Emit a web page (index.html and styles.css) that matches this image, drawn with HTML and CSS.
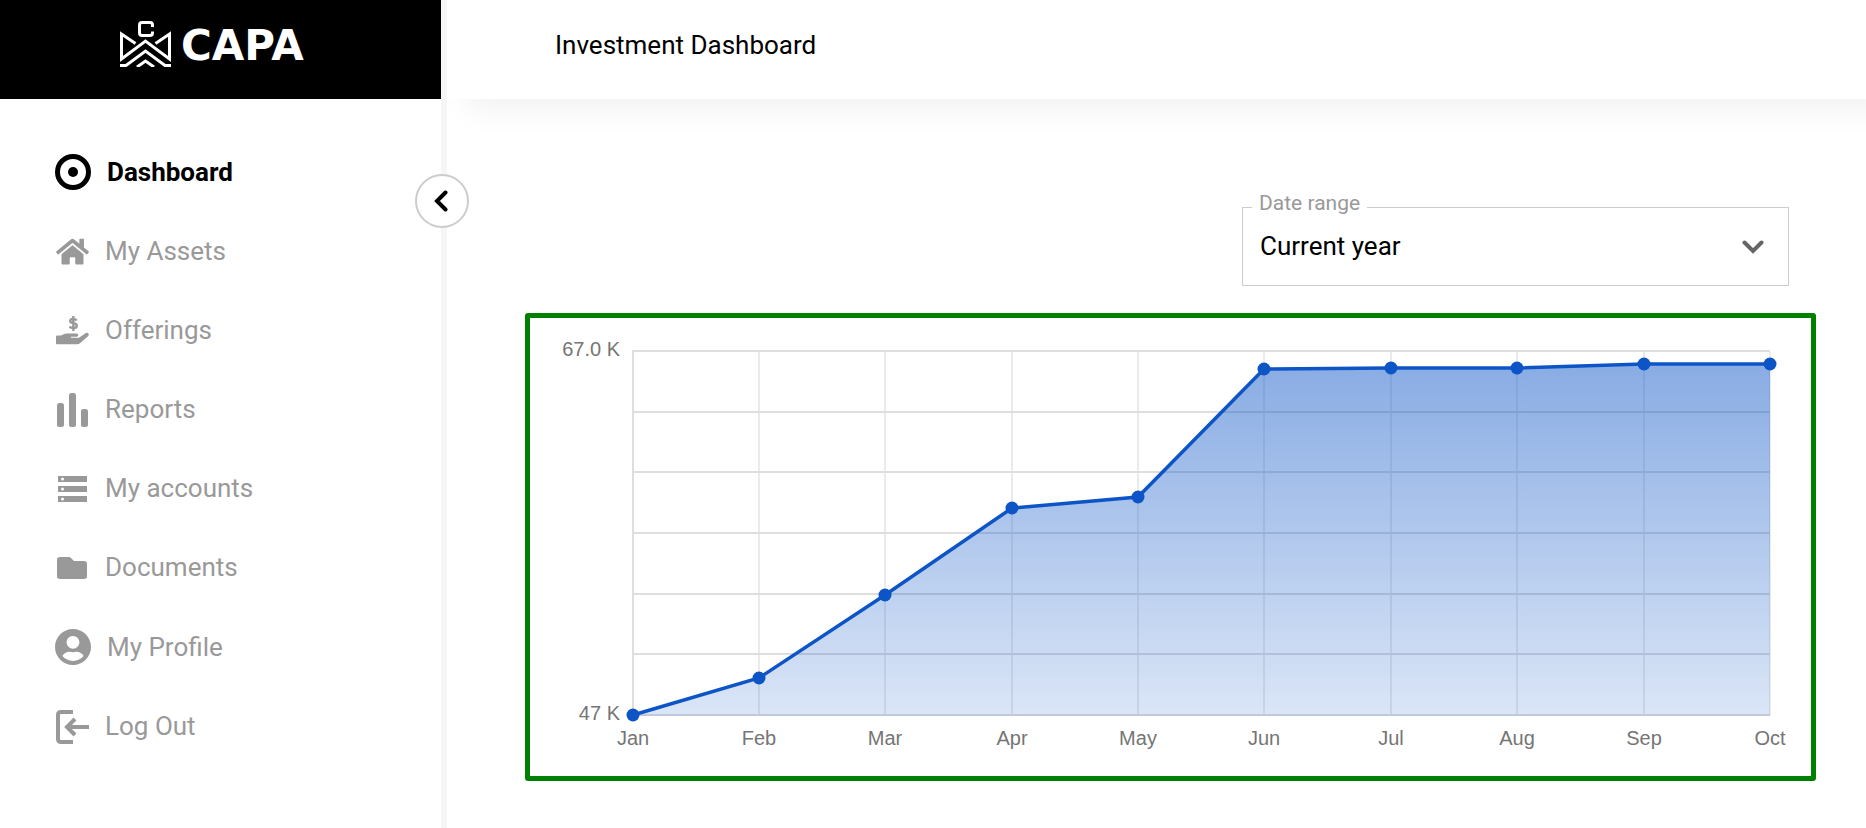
FILE: index.html
```html
<!DOCTYPE html>
<html lang="en">
<head>
    <meta charset="utf-8">
    <title>Investment Dashboard</title>
    <link rel="stylesheet" href="styles.css">
</head>
<body>
    <aside class="sidebar">
        <a class="logo" href="#">
            <svg class="logo-mark" viewBox="0 0 51 46" width="51" height="46">
                <path d="M32.500 6V4q0-2.500-2.500-2.500h-8q-2.500 0-2.500 2.500v8q0 2.500 2.500 2.500h8q2.500 0 2.500-2.500v-1.500"/>
                <path d="M15.500 22.500 1.500 13v25L25.500 20l24 18V13l-14 9.500"/>
                <path d="M0 44.500h6L25.500 30 45 44.500h6"/>
                <path d="M17 46l8.500-6 8.500 6"/>
            </svg>
            <span class="logo-text">CAPA</span>
        </a>
        <nav class="menu">
            <a class="menu-item active" href="#">
                <svg class="icon-large" viewBox="0 0 36 36">
                    <circle cx="18" cy="18" r="15.500" fill="none" stroke="currentColor" stroke-width="5"/>
                    <circle cx="18" cy="18" r="5" fill="currentColor"/>
                </svg>
                Dashboard
            </a>
            <a class="menu-item" href="#">
                <svg class="icon" viewBox="0 0 576 512"><path fill="currentColor" d="M280.370 148.260L96 300.110V464a16 16 0 0 0 16 16l112.060-.290a16 16 0 0 0 15.920-16V368a16 16 0 0 1 16-16h64a16 16 0 0 1 16 16v95.640a16 16 0 0 0 16 16.050L464 480a16 16 0 0 0 16-16V300L295.670 148.260a12.190 12.190 0 0 0-15.300 0zM571.600 251.470L488 182.560V44.050a12 12 0 0 0-12-12h-56a12 12 0 0 0-12 12v72.610L318.470 43a48 48 0 0 0-61 0L4.340 251.470a12 12 0 0 0-1.600 16.900l25.500 31A12 12 0 0 0 45.150 301l235.220-193.740a12.190 12.190 0 0 1 15.300 0L530.900 301a12 12 0 0 0 16.900-1.600l25.500-31a12 12 0 0 0-1.700-16.930z"/></svg>
                My Assets
            </a>
            <a class="menu-item" href="#">
                <svg class="icon" viewBox="0 0 33 30">
                    <path d="M20.500 4.500q-1-1.600-3.300-1.600-3 0-3 2.200 0 1.600 3.100 2.200 3.500.7 3.500 2.500 0 2.300-3.400 2.300-2.800 0-3.800-1.800M17.300 0v15" fill="none" stroke="currentColor" stroke-width="2.400"/>
                    <path fill="currentColor" d="M0 20.500q0-1 1-1h4l2.500-1.200q1.500-.800 3.500-.800h9.500q1.800 0 1.800 1.600t-1.800 1.600H15v1h8l6.500-4.500q1.700-1 2.900.3 1.100 1.300-.4 2.700l-8 7q-1.200 1.100-3 1.100H1q-1 0-1-1z"/>
                </svg>
                Offerings
            </a>
            <a class="menu-item" href="#">
                <svg class="icon" viewBox="0 0 33 34" fill="currentColor">
                    <rect x="1" y="10" width="7" height="24" rx="2.500"/>
                    <rect x="13" y="0" width="7" height="34" rx="2.500"/>
                    <rect x="25" y="16" width="7" height="18" rx="2.500"/>
                </svg>
                Reports
            </a>
            <a class="menu-item" href="#">
                <svg class="icon" viewBox="0 0 33 28">
                    <path fill="currentColor" d="M2 1h29v6H2zM2 11h29v6H2zM2 21h29v6H2z"/>
                    <g fill="#fff"><circle cx="6.500" cy="4" r="1.500"/><circle cx="6.500" cy="14" r="1.500"/><circle cx="6.500" cy="24" r="1.500"/></g>
                </svg>
                My accounts
            </a>
            <a class="menu-item" href="#">
                <svg class="icon" viewBox="0 0 33 24"><path fill="currentColor" d="M4 1h9q1 0 2 1l3 3h10q3 0 3 3v12q0 3-3 3H4q-3 0-3-3V4q0-3 3-3z"/></svg>
                Documents
            </a>
            <a class="menu-item" href="#">
                <svg class="icon-large" viewBox="0 0 496 496"><path fill="currentColor" d="M248 0C111 0 0 111 0 248s111 248 248 248 248-111 248-248S385 0 248 0zm0 96c48.600 0 88 39.400 88 88s-39.400 88-88 88-88-39.400-88-88 39.400-88 88-88zm0 344c-58.700 0-111.300-26.600-146.500-68.200 18.800-35.400 55.600-59.800 98.500-59.800 2.400 0 4.800.4 7.100 1.100 13 4.200 26.600 6.900 40.900 6.900 14.300 0 28-2.700 40.900-6.900 2.300-.7 4.700-1.100 7.100-1.100 42.900 0 79.700 24.400 98.500 59.800C359.300 413.400 306.700 440 248 440z"/></svg>
                My Profile
            </a>
            <a class="menu-item" href="#">
                <svg class="icon" viewBox="0 0 33 34" fill="none" stroke="currentColor" stroke-width="4">
                    <path d="M17 2H5Q2 2 2 5v24q0 3 3 3h12M33 17H12M19 9l-8 8 8 8"/>
                </svg>
                Log Out
            </a>
        </nav>
        <button class="collapse" type="button" aria-label="Collapse menu">
            <svg viewBox="0 0 14 22" width="14" height="22"><path d="M11.500 2.500 3 11l8.500 8.500" fill="none" stroke="currentColor" stroke-width="4" stroke-linecap="round"/></svg>
        </button>
    </aside>
    <div class="page">
        <header class="header">
            <h1>Investment Dashboard</h1>
        </header>
        <main class="content">
            <div class="field">
                <label for="range">Date range</label>
                <select id="range">
                    <option>Current year</option>
                </select>
                <svg class="arrow" viewBox="0 0 22 14" width="22" height="14"><path d="M2.500 2.500 11 11l8.500-8.500" fill="none" stroke="currentColor" stroke-width="4" stroke-linecap="round"/></svg>
            </div>
            <div class="chart">
                <svg viewBox="0 0 1281 458">
                    <defs>
                        <linearGradient id="fill" gradientUnits="userSpaceOnUse" x1="0" y1="34" x2="0" y2="398">
                            <stop offset="0" stop-color="#0d55c7" stop-opacity="0.500"/>
                            <stop offset="1" stop-color="#0d55c7" stop-opacity="0.150"/>
                        </linearGradient>
                    </defs>
                    <path class="grid-v" d="M229 34V397M355 34V397M482 34V397M608 34V397M734 34V397M861 34V397M987 34V397M1114 34V397M1240 34V397"/>
                    <path class="grid-h" d="M103 32V397M102 33H1240M103 94H1240M103 154H1240M103 215H1240M103 276H1240M103 336H1240M103 397H1240"/>
                    <path fill="url(#fill)" d="M103 397 229 360 355 277 482 190 608 179 734 51 861 50H987L1114 46H1240V398H103z"/>
                    <path class="line" stroke-width="3.500" d="M103 397 229 360 355 277 482 190 608 179 734 51 861 50H987L1114 46H1240"/>
                    <g class="dots">
                        <circle cx="103" cy="397" r="6.500"/>
                        <circle cx="229" cy="360" r="6.500"/>
                        <circle cx="355" cy="277" r="6.500"/>
                        <circle cx="482" cy="190" r="6.500"/>
                        <circle cx="608" cy="179" r="6.500"/>
                        <circle cx="734" cy="51" r="6.500"/>
                        <circle cx="861" cy="50" r="6.500"/>
                        <circle cx="987" cy="50" r="6.500"/>
                        <circle cx="1114" cy="46" r="6.500"/>
                        <circle cx="1240" cy="46" r="6.500"/>
                    </g>
                    <g class="labels-y">
                        <text x="90" y="38">67.0 K</text>
                        <text x="90" y="402">47 K</text>
                    </g>
                    <g class="labels-x">
                        <text x="103" y="427">Jan</text>
                        <text x="229" y="427">Feb</text>
                        <text x="355" y="427">Mar</text>
                        <text x="482" y="427">Apr</text>
                        <text x="608" y="427">May</text>
                        <text x="734" y="427">Jun</text>
                        <text x="861" y="427">Jul</text>
                        <text x="987" y="427">Aug</text>
                        <text x="1114" y="427">Sep</text>
                        <text x="1240" y="427">Oct</text>
                    </g>
                </svg>
            </div>
        </main>
    </div>
</body>
</html>
```
FILE: styles.css
```css
* {
    box-sizing: border-box;
}

body {
    margin: 0;
    display: flex;
    min-height: 100vh;
    font-family: Roboto, sans-serif;
    font-size: 26px;
    color: #000;
    background-color: #fff;
}

.sidebar {
    position: relative;
    flex: 0 0 447px;
    border-right: 6px solid #f6f6f6;
    background-color: #fff;
}

.logo {
    display: flex;
    align-items: center;
    justify-content: center;
    gap: 10px;
    height: 99px;
    padding-bottom: 11px;
    background-color: #000;
    color: #fff;
    text-decoration: none;
}

.logo-mark {
    fill: none;
    stroke: #fff;
    stroke-width: 3;
}

.logo-text {
    width: 140px;
    padding-top: 4px;
    font-family: "DejaVu Sans", sans-serif;
    font-weight: bold;
    font-size: 42px;
    line-height: 48px;
}

.menu {
    padding: 33px 0 0 55px;
}

.menu-item {
    display: flex;
    align-items: center;
    gap: 16px;
    padding: 22px 0;
    line-height: 35px;
    color: #999;
    text-decoration: none;
}

.menu-item.active {
    color: #000;
    font-weight: bold;
}

.icon {
    width: 33px;
    margin-left: 1px;
}

.icon-large {
    width: 36px;
    height: 36px;
}

.collapse {
    position: absolute;
    top: 174px;
    right: -28px;
    display: flex;
    align-items: center;
    justify-content: center;
    width: 54px;
    height: 54px;
    padding: 0 2px 0 0;
    border: 2px solid #ccc;
    border-radius: 50%;
    background-color: #fff;
    color: #000;
    cursor: pointer;
}

.page {
    flex: 1;
    min-width: 0;
}

.header {
    height: 99px;
    padding: 28px 108px;
    box-shadow: 20px 10px 30px rgba(0, 0, 0, 0.06);
}

h1 {
    margin: 0;
    font-size: 26px;
    font-weight: normal;
    line-height: 34px;
}

.content {
    padding: 108px 50px 0 78px;
}

.field {
    position: relative;
    width: 547px;
    margin: 0 27px 27px auto;
}

.field label {
    position: absolute;
    top: -18px;
    left: 10px;
    padding: 0 7px;
    font-size: 21px;
    line-height: 28px;
    color: #999;
    background-color: #fff;
}

.field select {
    appearance: none;
    display: block;
    width: 100%;
    height: 79px;
    padding: 0 17px 2px;
    border: 1px solid #ccc;
    border-radius: 0;
    background-color: #fff;
    font: inherit;
    color: #000;
}

.arrow {
    position: absolute;
    top: 33px;
    right: 25px;
    color: #666;
    pointer-events: none;
}

.chart {
    border: 5px solid #008000;
    border-radius: 3px;
}

.chart svg {
    display: block;
    width: 100%;
    font-family: "Liberation Sans", Arial, sans-serif;
    font-size: 20px;
    fill: #757575;
}

.grid-v,
.grid-h {
    fill: none;
    stroke: #ebebeb;
    stroke-width: 2;
}

.grid-h {
    stroke: #dedede;
}

.line {
    fill: none;
    stroke: #0d55c7;
}

.dots {
    fill: #0d55c7;
}

.labels-y {
    text-anchor: end;
}

.labels-x {
    text-anchor: middle;
}
```
